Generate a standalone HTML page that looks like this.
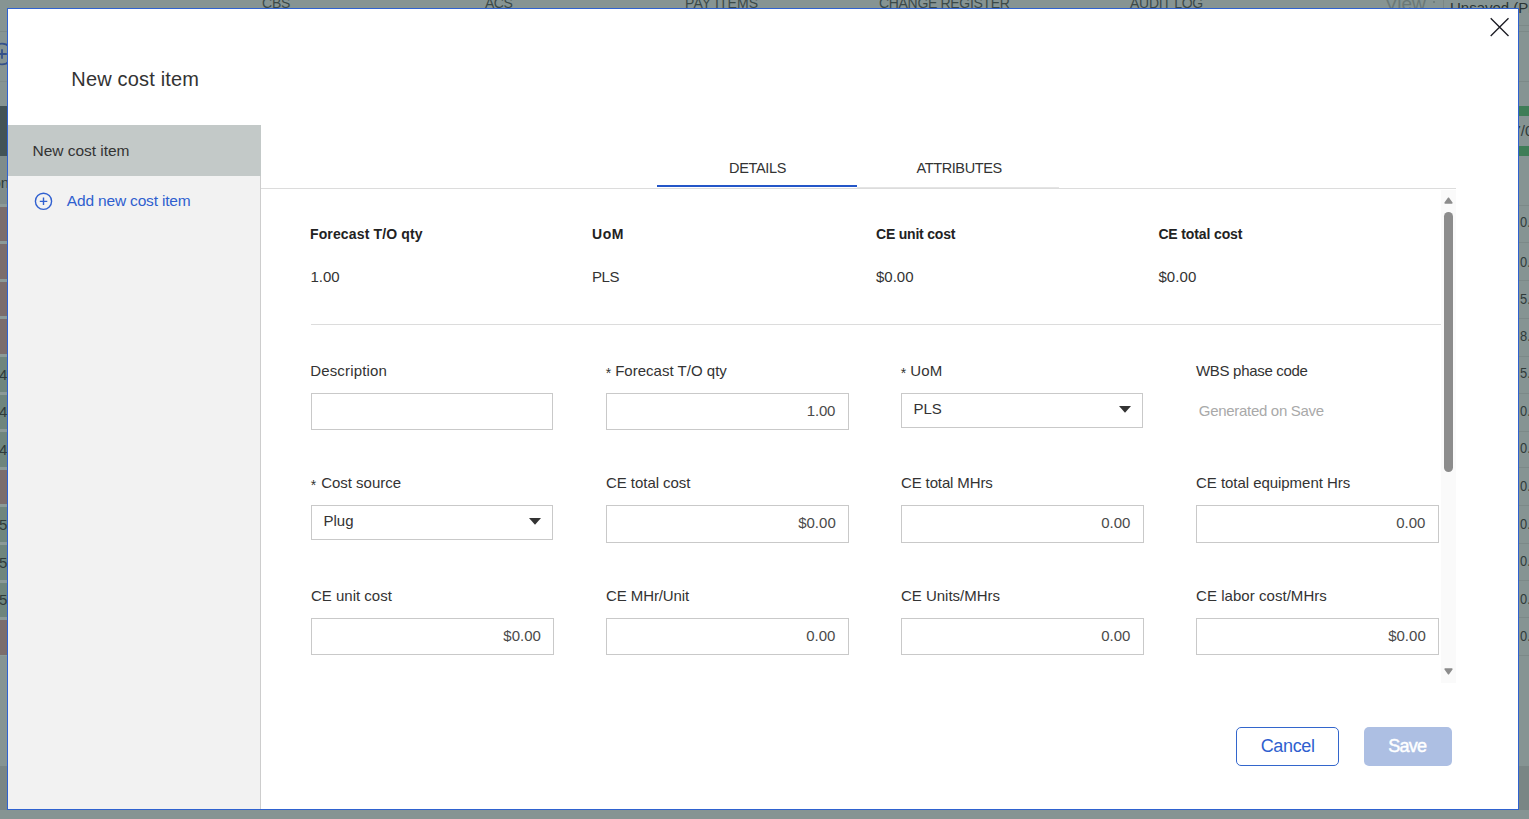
<!DOCTYPE html>
<html><head><meta charset="utf-8"><style>
*{margin:0;padding:0;box-sizing:border-box}
html,body{width:1529px;height:819px;overflow:hidden}
body{position:relative;background:#869493;font-family:"Liberation Sans",sans-serif;color:#333}
.a{position:absolute}
.t{position:absolute;white-space:nowrap;line-height:1}
.inp{position:absolute;border:1px solid #c9c9c9;background:#fff}
</style></head><body>
<div class="t" style="left:262px;top:-4px;font-size:14px;color:#3b4948;letter-spacing:-0.2px">CBS</div>
<div class="t" style="left:485px;top:-4px;font-size:14px;color:#3b4948;letter-spacing:-0.5px">ACS</div>
<div class="t" style="left:685px;top:-4px;font-size:14px;color:#3b4948;letter-spacing:0.1px">PAY ITEMS</div>
<div class="t" style="left:879px;top:-4px;font-size:14px;color:#3b4948;letter-spacing:-0.32px">CHANGE REGISTER</div>
<div class="t" style="left:1130px;top:-4px;font-size:14px;color:#3b4948;letter-spacing:-0.25px">AUDIT LOG</div>
<div class="t" style="left:1385px;top:-6px;font-size:19px;color:#6a7877">View</div>
<div class="a" style="left:1433px;top:1px;width:2px;height:2px;border-radius:1px;background:#6a7877"></div>
<div class="a" style="left:1443px;top:0;width:1px;height:8px;background:#7a8685"></div>
<div class="t" style="left:1450px;top:0px;font-size:15px;color:#2a3433">Unsaved (Pr</div>
<div class="a" style="left:0;top:31px;width:7px;height:1px;background:#7c8988"></div>
<svg class="a" style="left:-10px;top:42px" width="24" height="24" viewBox="0 0 24 24"><circle cx="12" cy="12" r="10.3" stroke="#35518a" stroke-width="1.8" fill="none"/><path d="M12 7.2V16.8M7.2 12H16.8" stroke="#35518a" stroke-width="1.8"/></svg>
<div class="a" style="left:0;top:81px;width:7px;height:1px;background:#7f8c8b"></div>
<div class="a" style="left:0;top:106px;width:7px;height:50px;background:#435356"></div>
<div class="a" style="left:0;top:156px;width:7px;height:50px;background:#7f8c8b"></div>
<div class="t" style="left:-7.5px;top:175px;font-size:15px;color:#2f3b3a">on</div>
<div class="a" style="left:0;top:205.0px;width:7px;height:37.6px;background:#7b6d6c"></div>
<div class="a" style="left:0;top:242.6px;width:7px;height:37.6px;background:#7b6d6c"></div>
<div class="a" style="left:0;top:280.2px;width:7px;height:37.6px;background:#7b6d6c"></div>
<div class="a" style="left:0;top:317.8px;width:7px;height:37.6px;background:#7b6d6c"></div>
<div class="a" style="left:0;top:355.4px;width:7px;height:37.6px;background:#6f857d"></div>
<div class="t" style="left:-1px;top:366.7px;font-size:15px;color:#2f3b3a">4</div>
<div class="a" style="left:0;top:393.0px;width:7px;height:37.6px;background:#6f857d"></div>
<div class="t" style="left:-1px;top:404.3px;font-size:15px;color:#2f3b3a">4</div>
<div class="a" style="left:0;top:430.6px;width:7px;height:37.6px;background:#6f857d"></div>
<div class="t" style="left:-1px;top:441.9px;font-size:15px;color:#2f3b3a">4</div>
<div class="a" style="left:0;top:468.2px;width:7px;height:37.6px;background:#7b6d6c"></div>
<div class="a" style="left:0;top:505.8px;width:7px;height:37.6px;background:#6f857d"></div>
<div class="t" style="left:-1px;top:517.1px;font-size:15px;color:#2f3b3a">5</div>
<div class="a" style="left:0;top:543.4px;width:7px;height:37.6px;background:#6f857d"></div>
<div class="t" style="left:-1px;top:554.7px;font-size:15px;color:#2f3b3a">5</div>
<div class="a" style="left:0;top:581.0px;width:7px;height:37.6px;background:#6f857d"></div>
<div class="t" style="left:-1px;top:592.3px;font-size:15px;color:#2f3b3a">5</div>
<div class="a" style="left:0;top:618.6px;width:7px;height:37.6px;background:#7b6d6c"></div>
<div class="a" style="left:0;top:203.5px;width:7px;height:3px;background:#8c9a98"></div>
<div class="a" style="left:0;top:241.1px;width:7px;height:3px;background:#8c9a98"></div>
<div class="a" style="left:0;top:278.7px;width:7px;height:3px;background:#8c9a98"></div>
<div class="a" style="left:0;top:316.3px;width:7px;height:3px;background:#8c9a98"></div>
<div class="a" style="left:0;top:353.9px;width:7px;height:3px;background:#8c9a98"></div>
<div class="a" style="left:0;top:391.5px;width:7px;height:3px;background:#8c9a98"></div>
<div class="a" style="left:0;top:429.1px;width:7px;height:3px;background:#8c9a98"></div>
<div class="a" style="left:0;top:466.7px;width:7px;height:3px;background:#8c9a98"></div>
<div class="a" style="left:0;top:504.3px;width:7px;height:3px;background:#8c9a98"></div>
<div class="a" style="left:0;top:541.9px;width:7px;height:3px;background:#8c9a98"></div>
<div class="a" style="left:0;top:579.5px;width:7px;height:3px;background:#8c9a98"></div>
<div class="a" style="left:0;top:617.1px;width:7px;height:3px;background:#8c9a98"></div>
<div class="a" style="left:0;top:654.7px;width:7px;height:3px;background:#8c9a98"></div>
<div class="a" style="left:0;top:656px;width:7px;height:110px;background:#869493"></div>
<div class="a" style="left:0;top:766px;width:7px;height:44px;background:#7a8685"></div>
<div class="a" style="left:1519px;top:25px;width:10px;height:1px;background:#7c8988"></div>
<div class="a" style="left:1519px;top:31px;width:10px;height:1px;background:#7c8988"></div>
<div class="a" style="left:1519px;top:81px;width:10px;height:1px;background:#7c8988"></div>
<div class="a" style="left:1519px;top:106px;width:10px;height:10px;background:#3f7d57"></div>
<div class="t" style="left:1512.5px;top:123px;font-size:15px;color:#2f3b3a">7/0</div>
<div class="a" style="left:1519px;top:146px;width:10px;height:10px;background:#3f7d57"></div>
<div class="a" style="left:1519px;top:205px;width:10px;height:1px;background:#7c8988"></div>
<div class="t" style="left:1519.5px;top:213.8px;font-size:15px;color:#2f3b3a;transform:scaleX(0.86);transform-origin:0 0">0.</div>
<div class="t" style="left:1519.5px;top:253.8px;font-size:15px;color:#2f3b3a;transform:scaleX(0.86);transform-origin:0 0">0.</div>
<div class="t" style="left:1519.5px;top:290.8px;font-size:15px;color:#2f3b3a;transform:scaleX(0.86);transform-origin:0 0">5.</div>
<div class="t" style="left:1519.5px;top:327.8px;font-size:15px;color:#2f3b3a;transform:scaleX(0.86);transform-origin:0 0">8.</div>
<div class="t" style="left:1519.5px;top:364.8px;font-size:15px;color:#2f3b3a;transform:scaleX(0.86);transform-origin:0 0">5.</div>
<div class="t" style="left:1519.5px;top:402.8px;font-size:15px;color:#2f3b3a;transform:scaleX(0.86);transform-origin:0 0">0.</div>
<div class="t" style="left:1519.5px;top:439.8px;font-size:15px;color:#2f3b3a;transform:scaleX(0.86);transform-origin:0 0">0.</div>
<div class="t" style="left:1519.5px;top:477.8px;font-size:15px;color:#2f3b3a;transform:scaleX(0.86);transform-origin:0 0">0.</div>
<div class="t" style="left:1519.5px;top:515.8px;font-size:15px;color:#2f3b3a;transform:scaleX(0.86);transform-origin:0 0">0.</div>
<div class="t" style="left:1519.5px;top:552.8px;font-size:15px;color:#2f3b3a;transform:scaleX(0.86);transform-origin:0 0">0.</div>
<div class="t" style="left:1519.5px;top:590.8px;font-size:15px;color:#2f3b3a;transform:scaleX(0.86);transform-origin:0 0">0.</div>
<div class="t" style="left:1519.5px;top:627.8px;font-size:15px;color:#2f3b3a;transform:scaleX(0.86);transform-origin:0 0">0.</div>
<div class="a" style="left:1519px;top:242px;width:10px;height:1px;background:#7c8988"></div>
<div class="a" style="left:1519px;top:280px;width:10px;height:1px;background:#7c8988"></div>
<div class="a" style="left:1519px;top:318px;width:10px;height:1px;background:#7c8988"></div>
<div class="a" style="left:1519px;top:356px;width:10px;height:1px;background:#7c8988"></div>
<div class="a" style="left:1519px;top:393px;width:10px;height:1px;background:#7c8988"></div>
<div class="a" style="left:1519px;top:431px;width:10px;height:1px;background:#7c8988"></div>
<div class="a" style="left:1519px;top:467px;width:10px;height:1px;background:#7c8988"></div>
<div class="a" style="left:1519px;top:505px;width:10px;height:1px;background:#7c8988"></div>
<div class="a" style="left:1519px;top:543px;width:10px;height:1px;background:#7c8988"></div>
<div class="a" style="left:1519px;top:580px;width:10px;height:1px;background:#7c8988"></div>
<div class="a" style="left:1519px;top:617px;width:10px;height:1px;background:#7c8988"></div>
<div class="a" style="left:1519px;top:655px;width:10px;height:1px;background:#7c8988"></div>
<div class="a" style="left:1519px;top:766px;width:10px;height:44px;background:#7a8685"></div>
<div class="a" style="left:7px;top:8px;width:1512px;height:802px;border:1px solid #2f62cf;background:#fff"></div>
<div class="a" style="left:8px;top:125px;width:253px;height:684px;background:#f2f2f2;border-right:1px solid #cdcdcd"></div>
<div class="a" style="left:8px;top:125px;width:253px;height:51px;background:#c3c9c8"></div>
<svg class="a" style="left:34px;top:192px" width="19" height="19" viewBox="0 0 19 19"><circle cx="9.5" cy="9.3" r="8.1" stroke="#3060d0" stroke-width="1.4" fill="none"/><path d="M9.5 5.6V13.1M5.8 9.4H13.3" stroke="#3060d0" stroke-width="1.4"/></svg>
<svg class="a" style="left:1489px;top:16px" width="21" height="22" viewBox="0 0 21 22"><path d="M1.7 2.3L19.5 20.1M19.5 2.3L1.7 20.1" stroke="#1c1c24" stroke-width="1.35" fill="none"/></svg>
<div class="a" style="left:261px;top:188px;width:1195px;height:1px;background:#dcdcdc"></div>
<div class="a" style="left:857px;top:187px;width:202px;height:1px;background:#e4e4e4"></div>
<div class="a" style="left:657px;top:185px;width:200px;height:2px;background:#2456c8"></div>
<div class="a" style="left:1441px;top:190px;width:15px;height:493px;background:#fafafa"></div>
<svg class="a" style="left:1444px;top:197px" width="9" height="7" viewBox="0 0 9 7"><path d="M4.5 1.2L7.9 5.9H1.1Z" fill="#8c8c8c" stroke="#8c8c8c" stroke-width="1.5" stroke-linejoin="round"/></svg>
<div class="a" style="left:1444px;top:212px;width:9px;height:260px;border-radius:4.5px;background:#8c8c8c"></div>
<svg class="a" style="left:1444px;top:668px" width="9" height="7" viewBox="0 0 9 7"><path d="M4.5 5.8L7.9 1.1H1.1Z" fill="#8c8c8c" stroke="#8c8c8c" stroke-width="1.5" stroke-linejoin="round"/></svg>
<div class="a" style="left:311px;top:324px;width:1130px;height:1px;background:#dcdcdc"></div>
<div class="inp" style="left:311px;top:393px;width:242px;height:37px"></div>
<div class="inp" style="left:606px;top:393px;width:243px;height:37px"></div>
<div class="inp" style="left:901px;top:393px;width:242px;height:35px"></div>
<svg class="a" style="left:1119px;top:406px" width="12" height="7" viewBox="0 0 12 7"><path d="M0 0H12L6 6.8Z" fill="#333"/></svg>
<div class="inp" style="left:311px;top:505px;width:242px;height:35px"></div>
<svg class="a" style="left:529px;top:518px" width="12" height="7" viewBox="0 0 12 7"><path d="M0 0H12L6 6.8Z" fill="#333"/></svg>
<div class="inp" style="left:606px;top:505px;width:243px;height:38px"></div>
<div class="inp" style="left:901px;top:505px;width:243px;height:38px"></div>
<div class="inp" style="left:1196px;top:505px;width:243px;height:38px"></div>
<div class="inp" style="left:311px;top:618px;width:243px;height:37px"></div>
<div class="inp" style="left:606px;top:618px;width:243px;height:37px"></div>
<div class="inp" style="left:901px;top:618px;width:243px;height:37px"></div>
<div class="inp" style="left:1196px;top:618px;width:243px;height:37px"></div>
<div class="t" style="left:605.7px;top:365.5px;font-size:14px;color:#333">*</div>
<div class="t" style="left:900.7px;top:365.5px;font-size:14px;color:#333">*</div>
<div class="t" style="left:310.7px;top:477.5px;font-size:14px;color:#333">*</div>
<div class="a" style="left:1236px;top:727px;width:103px;height:39px;border:1px solid #3366cc;border-radius:5px;background:#fff"></div>
<div class="a" style="left:1364px;top:727px;width:88px;height:39px;border-radius:5px;background:#adbfe3"></div>
<div class="t" style="left:71.3px;top:69px;font-size:20px;font-weight:400;color:#333333;letter-spacing:0.175px;">New cost item</div>
<div class="t" style="left:32.5px;top:143px;font-size:15.5px;font-weight:400;color:#333333;letter-spacing:-0.033px;">New cost item</div>
<div class="t" style="left:66.8px;top:193px;font-size:15.5px;font-weight:400;color:#2f5fcf;letter-spacing:-0.169px;">Add new cost item</div>
<div class="t" style="left:729px;top:161px;font-size:14.5px;font-weight:400;color:#333333;letter-spacing:-0.333px;">DETAILS</div>
<div class="t" style="left:916.5px;top:161px;font-size:14.5px;font-weight:400;color:#333333;letter-spacing:-0.389px;">ATTRIBUTES</div>
<div class="t" style="left:310px;top:227px;font-size:14px;font-weight:700;color:#222222;letter-spacing:0.133px;">Forecast T/O qty</div>
<div class="t" style="left:592px;top:227px;font-size:14px;font-weight:700;color:#222222;letter-spacing:0.6px;">UoM</div>
<div class="t" style="left:876px;top:227px;font-size:14px;font-weight:700;color:#222222;letter-spacing:-0.209px;">CE unit cost</div>
<div class="t" style="left:1158.4px;top:227px;font-size:14px;font-weight:700;color:#222222;letter-spacing:-0.133px;">CE total cost</div>
<div class="t" style="left:310.4px;top:269px;font-size:15px;font-weight:400;color:#333333;letter-spacing:0.0px;">1.00</div>
<div class="t" style="left:592px;top:269px;font-size:15px;font-weight:400;color:#333333;letter-spacing:-0.4px;">PLS</div>
<div class="t" style="left:876px;top:269px;font-size:15px;font-weight:400;color:#333333;letter-spacing:0.0px;">$0.00</div>
<div class="t" style="left:1158.4px;top:269px;font-size:15px;font-weight:400;color:#333333;letter-spacing:0.075px;">$0.00</div>
<div class="t" style="left:310.2px;top:363px;font-size:15px;font-weight:400;color:#333333;letter-spacing:0.16px;">Description</div>
<div class="t" style="left:615.2px;top:363px;font-size:15px;font-weight:400;color:#333333;letter-spacing:0.013px;">Forecast T/O qty</div>
<div class="t" style="left:910.2px;top:363px;font-size:15px;font-weight:400;color:#333333;letter-spacing:0.25px;">UoM</div>
<div class="t" style="left:1196px;top:363px;font-size:15px;font-weight:400;color:#333333;letter-spacing:-0.308px;">WBS phase code</div>
<div class="t" style="left:321.2px;top:475px;font-size:15px;font-weight:400;color:#333333;letter-spacing:-0.02px;">Cost source</div>
<div class="t" style="left:606px;top:475px;font-size:15px;font-weight:400;color:#333333;letter-spacing:-0.05px;">CE total cost</div>
<div class="t" style="left:901px;top:475px;font-size:15px;font-weight:400;color:#333333;letter-spacing:-0.133px;">CE total MHrs</div>
<div class="t" style="left:1196px;top:475px;font-size:15px;font-weight:400;color:#333333;letter-spacing:-0.043px;">CE total equipment Hrs</div>
<div class="t" style="left:311px;top:588px;font-size:15px;font-weight:400;color:#333333;letter-spacing:0.0px;">CE unit cost</div>
<div class="t" style="left:606px;top:588px;font-size:15px;font-weight:400;color:#333333;letter-spacing:-0.09px;">CE MHr/Unit</div>
<div class="t" style="left:901px;top:588px;font-size:15px;font-weight:400;color:#333333;letter-spacing:-0.017px;">CE Units/MHrs</div>
<div class="t" style="left:1196px;top:588px;font-size:15px;font-weight:400;color:#333333;letter-spacing:0.047px;">CE labor cost/MHrs</div>
<div class="t" style="left:806.8px;top:403px;font-size:15px;font-weight:400;color:#4a4a4a;letter-spacing:-0.2px;">1.00</div>
<div class="t" style="left:913.4px;top:401px;font-size:15px;font-weight:400;color:#333333;letter-spacing:0.0px;">PLS</div>
<div class="t" style="left:1198.8px;top:403px;font-size:15px;font-weight:400;color:#a9a9a9;letter-spacing:-0.3px;">Generated on Save</div>
<div class="t" style="left:323.5px;top:513px;font-size:15px;font-weight:400;color:#333333;letter-spacing:0.0px;">Plug</div>
<div class="t" style="left:798.2px;top:515px;font-size:15px;font-weight:400;color:#4a4a4a;letter-spacing:0.0px;">$0.00</div>
<div class="t" style="left:1101.2px;top:515px;font-size:15px;font-weight:400;color:#4a4a4a;letter-spacing:0.0px;">0.00</div>
<div class="t" style="left:1396.2px;top:515px;font-size:15px;font-weight:400;color:#4a4a4a;letter-spacing:0.0px;">0.00</div>
<div class="t" style="left:503.3px;top:628px;font-size:15px;font-weight:400;color:#4a4a4a;letter-spacing:0.0px;">$0.00</div>
<div class="t" style="left:806.2px;top:628px;font-size:15px;font-weight:400;color:#4a4a4a;letter-spacing:0.0px;">0.00</div>
<div class="t" style="left:1101.2px;top:628px;font-size:15px;font-weight:400;color:#4a4a4a;letter-spacing:0.0px;">0.00</div>
<div class="t" style="left:1388.2px;top:628px;font-size:15px;font-weight:400;color:#4a4a4a;letter-spacing:0.0px;">$0.00</div>
<div class="t" style="left:1260.7px;top:737px;font-size:18px;font-weight:400;color:#2f5fcf;letter-spacing:-0.34px;">Cancel</div>
<div class="t" style="left:1388.2px;top:737px;font-size:18px;font-weight:400;color:#ffffff;letter-spacing:-0.7px;-webkit-text-stroke:0.45px #fff;">Save</div>
</body></html>
